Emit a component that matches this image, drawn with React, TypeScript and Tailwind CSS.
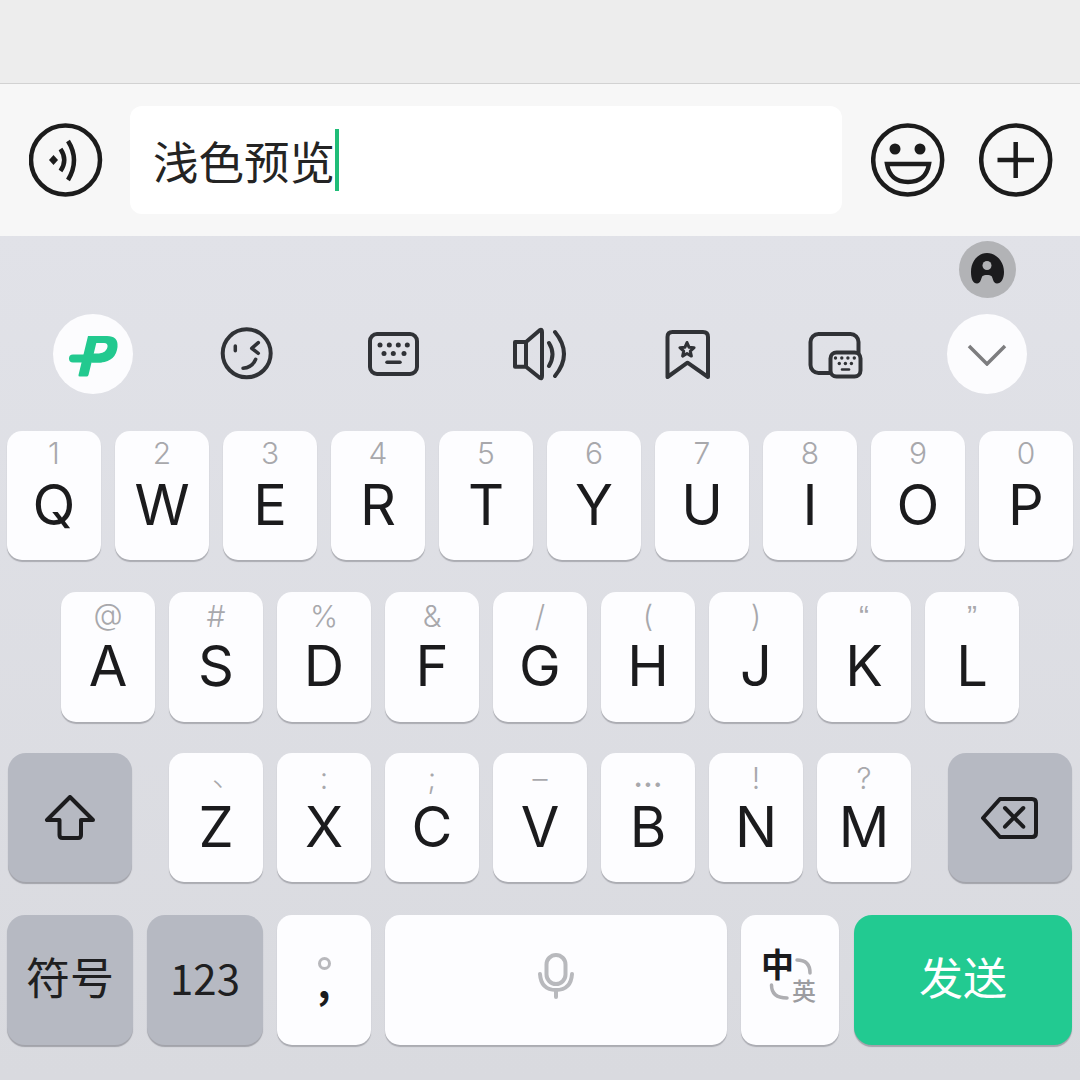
import React from 'react';

const cjk = "font-['Noto_Sans_CJK_SC','Noto_Sans',sans-serif]";

const rowOne = [
  ['1', 'Q'], ['2', 'W'], ['3', 'E'], ['4', 'R'], ['5', 'T'],
  ['6', 'Y'], ['7', 'U'], ['8', 'I'], ['9', 'O'], ['0', 'P'],
];
const rowTwo = [
  ['@', 'A'], ['#', 'S'], ['%', 'D'], ['&', 'F'], ['/', 'G'],
  ['(', 'H'], [')', 'J'], ['“', 'K'], ['”', 'L'],
];
const rowThree = [
  ['、', 'Z'], [':', 'X'], [';', 'C'], ['–', 'V'], ['…', 'B'], ['!', 'N'], ['?', 'M'],
];

const LetterKey: React.FC<{ hint: string; label: string; hintClass?: string; tall?: boolean }> = ({ hint, label, hintClass = 'text-[30px]', tall }) => (
  <div className={`flex w-[94px] flex-col items-center rounded-[15px] bg-[#fdfdff] pt-[6px] shadow-[0_2px_1px_#abacb2] ${tall ? 'h-[130px]' : 'h-[129px]'}`}>
    <span className={`font-light leading-[32px] text-[#a8a8ac] ${hintClass}`}>{hint}</span>
    <span className="mt-[8px] text-[56px] font-[425] leading-[56px] text-[#1b1b1d]">{label}</span>
  </div>
);

const GrayKey: React.FC<{ className: string; children: React.ReactNode }> = ({ className, children }) => (
  <div className={`flex items-center justify-center rounded-[18px] bg-[#b6b9c2] shadow-[0_2px_1px_#a2a3aa] ${className}`}>
    {children}
  </div>
);

const ToolIcon: React.FC<{ box: string; children: React.ReactNode }> = ({ box, children }) => (
  <svg viewBox={box} className="h-[56px] w-[56px]" fill="none" stroke="#303236" strokeWidth="4" strokeLinecap="round" strokeLinejoin="round">
    {children}
  </svg>
);

const dots = (points: number[][], r: number) =>
  points.map(([x, y]) => <circle key={`${x}-${y}`} cx={x} cy={y} r={r} fill="#303236" stroke="none" />);

const rowTwoHint = (hint: string) => {
  if (hint === '“' || hint === '”') return "translate-y-[2px] text-[30px] font-['Liberation_Sans'] font-normal";
  return hint === '@' ? 'text-[30px]' : 'translate-y-[2px] text-[30px]';
};

const rowThreeHint = (hint: string) => {
  if (hint === '、') return `translate-x-[11px] translate-y-[-2px] text-[30px] ${cjk}`;
  if (hint === '…') return 'text-[34px] font-normal';
  return 'translate-y-[3px] text-[30px]';
};

export default function App() {
  return (
    <div className="flex h-[1080px] w-[1080px] flex-col overflow-hidden font-['Inter','Liberation_Sans',sans-serif]">
      <div className="h-[84px] shrink-0 border-b border-[#d2d2d2] bg-[#ededed]" />

      <div className="flex h-[152px] shrink-0 items-center bg-[#f7f7f7] pl-[29px]">
        <svg viewBox="29 123 74 74" className="h-[74px] w-[74px]" fill="none" stroke="#1c1c1c" strokeWidth="4.500">
          <circle cx="65.500" cy="160" r="34.500" />
          <path d="M49 160 53.500 155 58 160 53.500 165Z" fill="#1c1c1c" stroke="none" />
          <path d="M60.500 149Q68 160 60.500 171" />
          <path d="M68 141Q80 160 68 180" />
        </svg>
        <div className={`ml-[27px] flex h-[108px] w-[712px] items-center rounded-[12px] bg-white pl-[23px] text-[45.500px] text-[#242424] ${cjk}`}>
          <span className="leading-[62px]">浅色预览</span>
          <span className="h-[62px] w-[4px] bg-[#1fbd78]" />
        </div>
        <svg viewBox="871 123 74 74" className="ml-[29px] h-[74px] w-[74px]" fill="none" stroke="#1c1c1c" strokeWidth="4.500">
          <circle cx="907.700" cy="160" r="34.500" />
          <circle cx="895" cy="149" r="5.500" fill="#1c1c1c" stroke="none" />
          <circle cx="920" cy="149" r="5.500" fill="#1c1c1c" stroke="none" />
          <path d="M887 164H929Q926 182 908 182Q890 182 887 164Z" />
        </svg>
        <svg viewBox="979 123 74 74" className="ml-[34px] h-[74px] w-[74px]" fill="none" stroke="#1c1c1c" strokeWidth="4.500">
          <circle cx="1015.700" cy="160" r="34.500" />
          <path d="M997.500 160H1034M1015.700 142V178" />
        </svg>
      </div>

      <div className="flex flex-1 flex-col bg-linear-to-b from-[#e1e2e8] to-[#d9dadf] pt-[5px]">
        <div className="flex justify-end pr-[64px]">
          <div className="flex h-[57px] w-[57px] items-center justify-center rounded-full bg-[#b2b3b6]">
            <svg viewBox="959 241 57 57" className="h-[57px] w-[57px]">
              <path d="M971 272C971 261 978 253 987 253C996 253 1004 261 1004 272C1004 279 1001 283.500 997 283.500C993 283.500 993 278 991.500 276C990 274.500 984 274.500 982.500 276C981 278 981 283.500 977 283.500C973 283.500 971 279 971 272Z" fill="#1b1b1d" />
              <circle cx="987" cy="265.500" r="4.500" fill="#b2b3b6" />
            </svg>
          </div>
        </div>

        <div className="mt-[16px] flex items-center pl-[53px]">
          <div className="flex h-[80px] w-[80px] items-center justify-center rounded-full bg-[#fcfcfe]">
            <svg viewBox="53 314 80 80" className="h-[80px] w-[80px]" fill="#22c98f">
              <path d="M88 336H98L88.500 375Q88 376.500 86.500 376.500H80Q78 376.500 78.500 375Z" />
              <path d="M73 358.500H100" fill="none" stroke="#22c98f" strokeWidth="8" strokeLinecap="round" />
              <path d="M92 336H107Q118.500 336 117.500 347Q116 361 101 362.500H92V353.500H99Q106.500 352.500 107.500 347Q108 343 104 343H92Z" />
            </svg>
          </div>
          <div className="ml-[86px] flex gap-[91px]">
            <ToolIcon box="219 326 56 56">
              <circle cx="246.700" cy="353.300" r="24" />
              <path d="M235.300 346V350.700M258.300 342.700 251.700 348.300 258.300 353.300M243 368.300Q252 368 255.700 359.300" strokeWidth="3.500" />
            </ToolIcon>
            <ToolIcon box="366 326 56 56">
              <rect x="370" y="334" width="47" height="40" rx="7" />
              {dots([[380, 345], [389.300, 345], [398.300, 345], [407.300, 345], [384, 353.500], [393.300, 353.500], [404, 353.500]], 2.500)}
              <path d="M387 362.300H400" strokeWidth="3.500" />
            </ToolIcon>
            <ToolIcon box="514 326 56 56">
              <path d="M516 342H527L541 330Q543 329 543 332V376Q543 379 541 378L527 366.700H516ZM527 342V366.700" />
              <path d="M550 343Q557 354 550 366M556 332Q574 354 556 376" />
            </ToolIcon>
            <ToolIcon box="660 326 56 56">
              <path d="M667.500 337Q667.500 332 672.500 332H703Q708 332 708 337V377L687.500 362.700 667.500 377Z" />
              <path d="M687 342.500 689 347.200 694.100 347.700 690.300 351.100 691.400 356.100 687 353.500 682.600 356.100 683.700 351.100 679.900 347.700 685 347.200Z" strokeWidth="3" />
            </ToolIcon>
            <ToolIcon box="807 326 56 56">
              <rect x="810.500" y="334" width="48" height="39" rx="8" />
              <rect x="830.500" y="352.500" width="30" height="24" rx="6" fill="#e1e2e8" />
              {dots([[835.500, 358], [841.800, 358], [847.900, 358], [854.300, 358], [839.300, 363.500], [845.400, 363.500], [851.400, 363.500]], 1.700)}
              <path d="M842 369.500H849" strokeWidth="2.500" />
            </ToolIcon>
          </div>
          <div className="ml-[84px] flex h-[80px] w-[80px] items-center justify-center rounded-full bg-[#fcfcfe]">
            <svg viewBox="0 0 40 22" className="mt-[2px] h-[22px] w-[40px]" fill="none" stroke="#7d7d7f" strokeWidth="3.500">
              <path d="M2 2 20 20 38 2" />
            </svg>
          </div>
        </div>

        <div className="mt-[37px] flex gap-[14px] pl-[7px]">
          {rowOne.map(([hint, label]) => <LetterKey key={label} hint={hint} label={label} />)}
        </div>

        <div className="mt-[32px] flex gap-[14px] pl-[61px]">
          {rowTwo.map(([hint, label]) => <LetterKey key={label} hint={hint} label={label} hintClass={rowTwoHint(hint)} tall />)}
        </div>

        <div className="mt-[31px] flex items-start pl-[8px]">
          <GrayKey className="h-[129px] w-[124px]">
            <svg viewBox="44 795 52 45" className="h-[45px] w-[52px]" fill="none" stroke="#1c1c1e" strokeWidth="4" strokeLinejoin="round">
              <path d="M70 797 47 820H59.500V835Q59.500 838 62.500 838H78Q81 838 81 835V820H93Z" />
            </svg>
          </GrayKey>
          <div className="ml-[37px] flex gap-[14px]">
            {rowThree.map(([hint, label]) => (
              <LetterKey key={label} hint={hint} label={label} hintClass={rowThreeHint(hint)} />
            ))}
          </div>
          <GrayKey className="ml-[37px] h-[129px] w-[124px]">
            <svg viewBox="980 795 60 45" className="h-[45px] w-[60px]" fill="none" stroke="#1c1c1e" strokeWidth="4" strokeLinecap="round" strokeLinejoin="round">
              <path d="M1000 799H1032Q1036 799 1036 803V833Q1036 837 1032 837H1000L983 818Z" />
              <path d="M1005 808 1023.300 826.700M1023.300 808 1005 826.700" />
            </svg>
          </GrayKey>
        </div>

        <div className={`mt-[33px] flex pl-[7px] ${cjk}`}>
          <GrayKey className="h-[130px] w-[126px] pb-[8px] text-[44px] text-[#1f1f21]">符号</GrayKey>
          <GrayKey className="ml-[14px] h-[130px] w-[116px] pb-[8px] text-[42px] text-[#1f1f21]">123</GrayKey>
          <div className="ml-[14px] flex h-[130px] w-[94px] flex-col items-center rounded-[15px] bg-[#fdfdff] pt-[42px] shadow-[0_2px_1px_#abacb2]">
            <span className="h-[13px] w-[13px] rounded-full border-[3px] border-[#b8b8bc]" />
            <span className="mt-[-17px] text-[40px] font-bold leading-[56px] text-[#1b1b1d]">,</span>
          </div>
          <div className="ml-[14px] flex h-[130px] w-[342px] items-center justify-center rounded-[15px] bg-[#fdfdff] pb-[8px] shadow-[0_2px_1px_#abacb2]">
            <svg viewBox="537 952 38 48" className="h-[48px] w-[38px]" fill="none" stroke="#b8b9bd" strokeWidth="4" strokeLinecap="round">
              <rect x="546.500" y="955" width="19" height="29" rx="9.500" />
              <path d="M540 974Q541 990 556 990Q571 990 572 974M556 990V997" />
            </svg>
          </div>
          <div className="relative ml-[14px] h-[130px] w-[98px] rounded-[15px] bg-[#fdfdff] shadow-[0_2px_1px_#abacb2]">
            <span className="absolute left-[20px] top-[28px] text-[33px] font-bold leading-[40px] text-[#1b1b1d]">中</span>
            <span className="absolute left-[51px] top-[60px] text-[24px] font-medium leading-[30px] text-[#9c9ca0]">英</span>
            <svg viewBox="741 915 98 130" className="h-[130px] w-[98px]" fill="none" stroke="#aeaeb2" strokeWidth="3.500" strokeLinecap="round">
              <path d="M797 960Q810 960 810 973M771.500 985Q771.500 998 787 998" />
            </svg>
          </div>
          <div className="ml-[15px] flex h-[130px] w-[218px] items-center justify-center rounded-[18px] bg-[#22ca91] pb-[8px] text-[44px] text-white shadow-[0_2px_1px_#a2a3aa]">
            发送
          </div>
        </div>
      </div>
    </div>
  );
}
